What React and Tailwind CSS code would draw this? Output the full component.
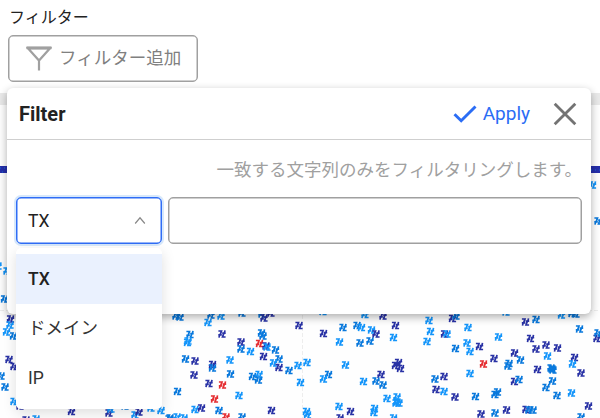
const COLORS = { l: '#1495fa', b: '#0878dc', n: '#2932a5', r: '#e52e32' };

// Transaction marks: centre x, centre y, series
const MARKS = [
  [176,316,'b'],[180,317,'b'],[211,315,'b'],[221,316,'l'],[242,313,'b'],[208,322.5,'l'],[262,314,'b'],[264,318,'n'],[271,313,'n'],[299,325.5,'n'],
  [190,334.5,'b'],[187.5,342.5,'l'],[188,341,'l'],[222,334,'n'],[241,342,'n'],[261.5,333,'b'],[263,336,'b'],[259.5,343.5,'r'],[266,346,'n'],[267,347,'l'],[241,349,'b'],[250.5,351.5,'l'],[275.5,350,'b'],
  [185.5,359,'b'],[195,361,'n'],[230,360,'l'],[263.5,356.5,'n'],[279,359,'b'],[273.5,363,'l'],[212.5,364.5,'n'],[212.5,368,'b'],[279,367.5,'n'],[289,370.5,'b'],[298,365.5,'l'],[307,362.5,'l'],
  [194,375,'n'],[230.5,374,'b'],[252.5,376.5,'b'],[259,374.5,'l'],[258.5,380,'b'],[209,383.5,'n'],[222.5,385,'r'],[300.5,382.5,'l'],[177.5,391.5,'b'],[214.5,399,'r'],[239,395.5,'l'],
  [161,410.5,'l'],[195,409.5,'l'],[201.5,408,'n'],[219,410.5,'b'],[271.5,410.5,'n'],[306.5,411.5,'l'],[307.5,415,'l'],[226,417,'r'],[170,418,'b'],[177,417,'l'],[184,418,'l'],[242,417,'b'],
  [323,311.5,'l'],[365,314.5,'l'],[383,316,'n'],[343,327.5,'b'],[357,325.5,'b'],[361.5,327.5,'l'],[371.5,330,'l'],[376,334,'n'],[395.5,325.5,'n'],[429,320.5,'l'],[452.5,318.5,'n'],[456,316,'b'],
  [323.5,333.5,'n'],[339.5,342,'l'],[360,343,'b'],[370,341,'b'],[393.5,337.5,'l'],[430.5,331.5,'l'],[427,341.5,'l'],[444.5,334,'n'],[447,334,'l'],
  [345.5,365,'l'],[398.5,362.5,'n'],[395.5,365.5,'n'],[400.5,368.5,'n'],[328.5,374.5,'b'],[323.5,379,'l'],[381,374.5,'n'],[363.5,381.5,'l'],[376,381,'b'],[383,385,'b'],[435,379,'b'],[444,376.5,'n'],[436,389.5,'n'],[444,391.5,'l'],
  [387,398.5,'l'],[397,397,'l'],[397,402,'l'],[399,403,'l'],[396,403,'l'],[339,406.5,'l'],[350.5,411.5,'n'],[374.5,408.5,'l'],[374,412.5,'l'],[340,418,'n'],[393.5,418,'l'],
  [506,312,'l'],[525.5,322,'n'],[536,319.5,'b'],[561.5,315,'l'],[572,313.5,'b'],[576,314,'b'],[468,327.5,'l'],[579.5,329,'b'],[498.5,337,'l'],[530.5,338.5,'n'],[597,338.5,'n'],[598,333,'b'],
  [455.5,348.5,'b'],[467,343,'l'],[479.5,346.5,'n'],[470,351.5,'l'],[536,349,'n'],[546,345,'n'],[557.5,348,'n'],[514.5,353,'n'],[547.5,356,'l'],[494,358.5,'n'],[520.5,360,'b'],[574.5,357.5,'n'],
  [483.5,364,'r'],[509,363.5,'b'],[508,366,'b'],[572.5,364,'l'],[470,373.5,'l'],[537.5,369.5,'n'],[551,368,'b'],[553,370,'b'],[552,369,'b'],[581,373,'n'],[514.5,381.5,'n'],[519,379.5,'b'],[552.5,381,'b'],[546,387.5,'b'],
  [455,397,'n'],[475.5,396.5,'b'],[497.5,392,'b'],[495,394.5,'b'],[557,395.5,'b'],[571.5,393,'l'],[588.5,406,'n'],[481,414,'n'],[495,413,'b'],[506.5,410,'n'],[526,409.5,'n'],[529,410,'b'],[533,410,'b'],[581,417,'b'],
  [4.5,299,'b'],[-2,266,'l'],[7,271,'l'],[10.5,319,'n'],[10,325,'l'],[6.5,332,'l'],[13.5,336,'b'],[9,359.5,'n'],[14,366.5,'n'],[1,376,'b'],[5,387,'b'],[14,401.5,'l'],
  [20,406,'n'],[26,420,'n'],[36,419,'l'],[71.5,411.5,'n'],[109,413,'n'],[111,409,'l'],[125,406,'b'],[135,415,'l'],[139,412,'n'],[151,408,'l'],[169,419,'b'],
  [592.5,185,'l'],[598,221,'b'],
];

function TransactionChart() {
  return (
    <svg className="block h-[313px] w-[600px] bg-[#fefefe]" viewBox="0 105 600 313">
      <defs>
        <path id="mark" d="M-3.6-3H-.5L-1.8 .6M-3.7 .8H-.2M-2.4 .8-3 3.7M3.6 3H.5L1.8-.6M.2-.8H3.7M2.4-.8 3-3.7" fill="none" strokeWidth="1.7" />
      </defs>
      <path d="M0 310.5H600M302.5 105V418" stroke="#ededed" strokeWidth="1" strokeDasharray="4 2" />
      <path d="M0 169.5H600" stroke="#252eaa" strokeWidth="7" />
      <path d="M0 168H8M591 170H600M2 172H6" stroke="#176bd5" strokeWidth="1" strokeDasharray="1 3" />
      {MARKS.map(([x, y, series], i) => (
        <use key={i} href="#mark" x={x} y={y} stroke={COLORS[series]} />
      ))}
    </svg>
  );
}

function Select() {
  return (
    <div className="relative w-[146px]">
      <div className="flex h-[47px] items-center justify-between rounded-[5px] border border-[#2f6df6] bg-white pl-[11px] pr-[15px] shadow-[0_0_0_2px_#d7e8fb,inset_0_0_0_0.5px_#2f6df6]">
        <span className="text-[17.5px] leading-6">TX</span>
        <svg width="12" height="12" viewBox="0 0 12 12" fill="none" stroke="#888" strokeWidth="1.2">
          <path d="M1.2 8.5 6 2.8 10.8 8.5" />
        </svg>
      </div>
      <div className="absolute left-0 top-[51px] w-[146px] rounded-[5px] bg-white pb-[6px] pt-[6px] text-[17.5px] text-[#333] shadow-[0_4px_14px_rgba(0,0,0,0.13)]">
        <div className="flex h-[50px] items-center bg-[#eaf1fe] pl-3 font-medium text-[#222]">TX</div>
        <div className="flex h-[49px] items-center pl-3">ドメイン</div>
        <div className="flex h-[50px] items-center pl-3">IP</div>
      </div>
    </div>
  );
}

function FilterPopup() {
  return (
    <section className="absolute left-[7px] top-[88px] h-[226px] w-[584px] rounded-[6px] bg-white shadow-[0_3px_9px_rgba(0,0,0,0.32)]">
      <header className="flex h-[52px] items-center border-b border-[#cfcfcf] pl-3 pr-[14px]">
        <h2 className="flex-1 text-[20px] font-bold leading-6 text-[#222]">Filter</h2>
        <button className="flex items-center gap-[6px] text-[19px] leading-6 text-[#2b6df5]">
          <svg width="24" height="20" viewBox="0 0 24 20" fill="none" stroke="currentColor" strokeWidth="2.9">
            <path d="m1.5 10.2 6.7 6.6L22.5 2.5" />
          </svg>
          <span className="mt-px">Apply</span>
        </button>
        <button className="ml-[23px] text-[#737373]">
          <svg width="24" height="24" viewBox="0 0 24 24" fill="none" stroke="currentColor" strokeWidth="2.8">
            <path d="m1.7 1.7 20.6 20.6M22.3 1.7 1.7 22.3" />
          </svg>
        </button>
      </header>
      <p className="mt-[18px] pr-[9px] text-right text-[17.5px] leading-6 text-[#a0a0a0]">一致する文字列のみをフィルタリングします。</p>
      <div className="mt-[15px] flex gap-[6px] pl-[9px] pr-[9px]">
        <Select />
        <input className="h-[47px] min-w-0 flex-1 rounded-[5px] border border-[#a0a0a0] bg-white shadow-[inset_0_0_0_0.5px_#a0a0a0] outline-none" />
      </div>
    </section>
  );
}

export default function App() {
  return (
    <main className="relative h-[418px] w-[600px] overflow-hidden bg-white font-[Roboto,'Noto_Sans_CJK_JP',sans-serif] text-[#222]">
      <div className="h-[93px] pl-2 pt-[6px]">
        <div className="h-[29px] pl-px text-[16px] leading-6">フィルター</div>
        <button className="flex h-[47px] w-[190px] items-center rounded-[5px] border border-[#a0a0a0] bg-white pl-[17px] text-[17.5px] text-[#808080] shadow-[inset_0_0_0_0.5px_#a0a0a0]">
          <svg className="mr-[7px]" width="26" height="25" viewBox="0 0 26 25" fill="none" stroke="#a0a0a0" strokeWidth="2.2">
            <path d="M2 2.3H24L13 14.5ZM13 13.5V24.5" />
            <path d="M.5 1.8H25.5" strokeWidth="2.8" />
          </svg>
          フィルター追加
        </button>
      </div>
      <div className="h-3 bg-[#e9e9e9]" />
      <TransactionChart />
      <FilterPopup />
    </main>
  );
}
